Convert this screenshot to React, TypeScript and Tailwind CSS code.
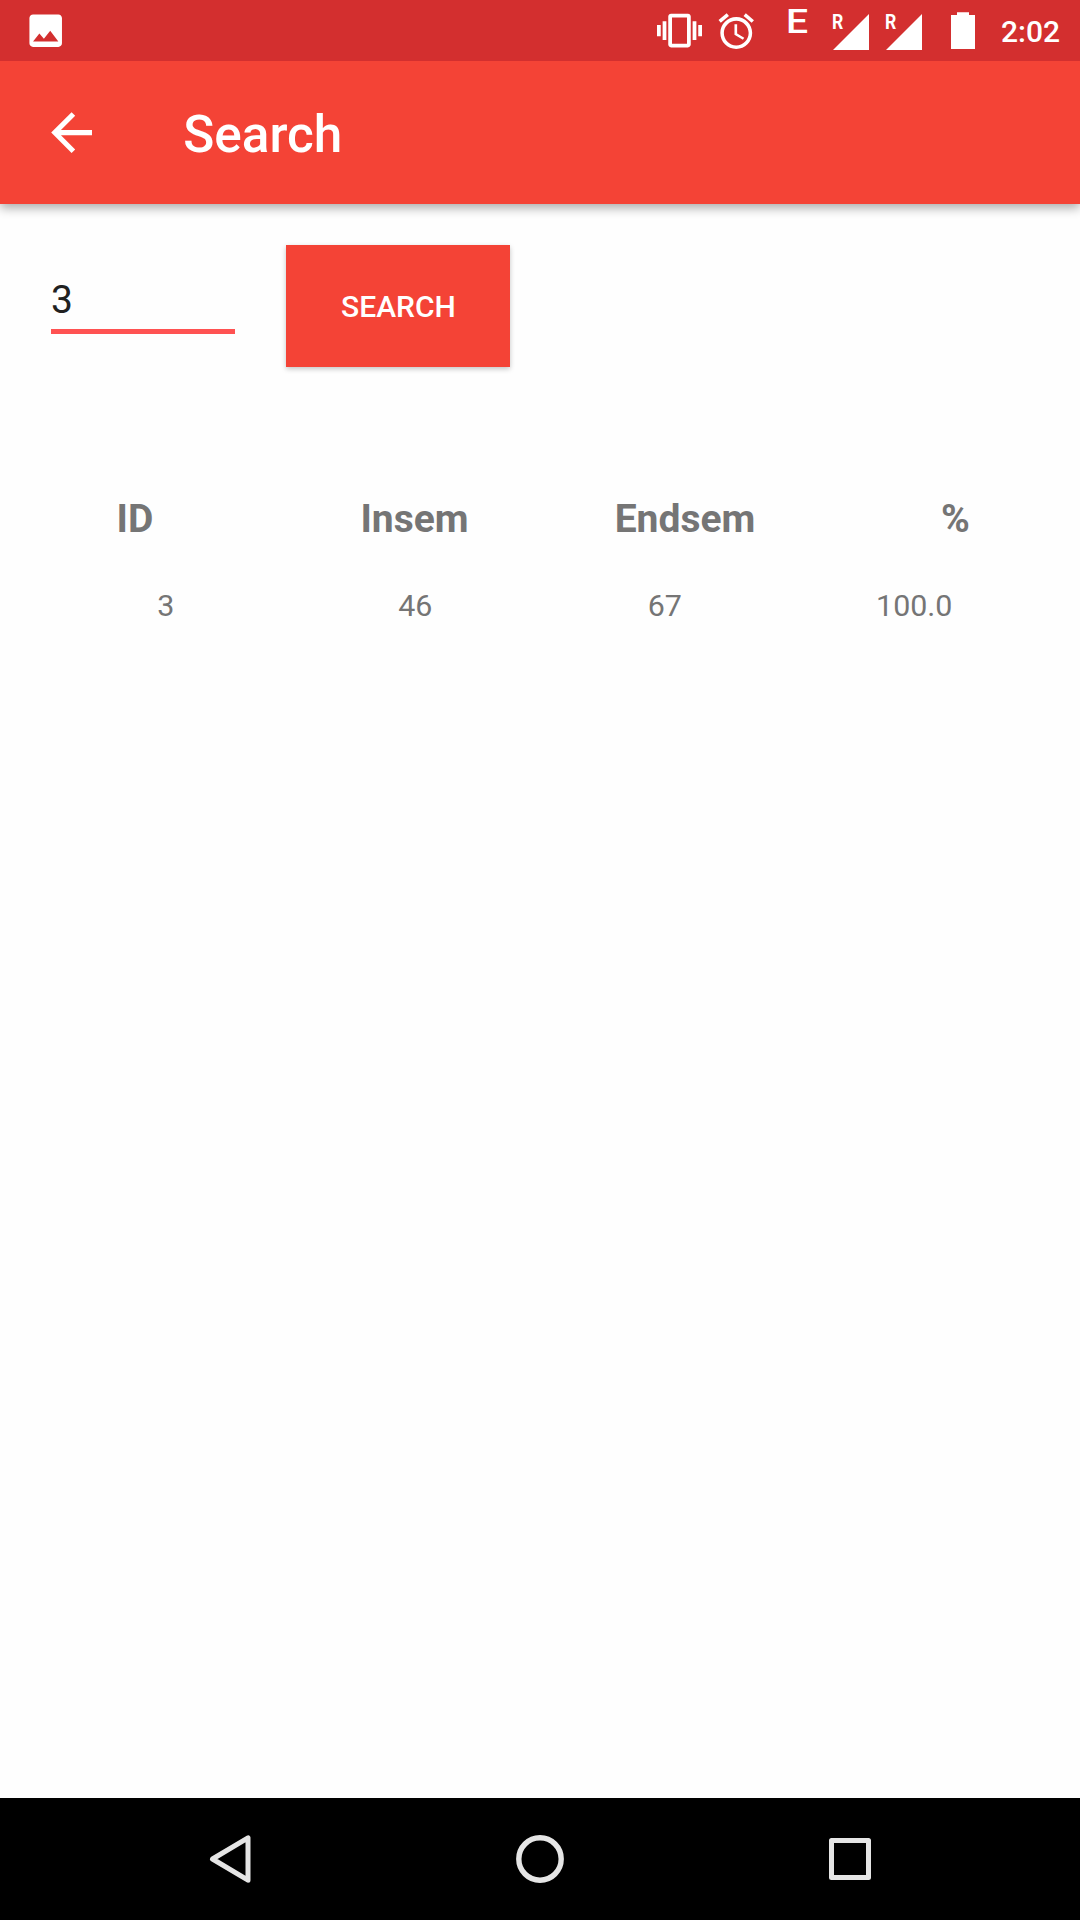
import React from 'react';

const headings = ['ID', 'Insem', 'Endsem', '%'];
const rows = [['3', '46', '67', '100.0']];

function SignalIcon() {
  return (
    <div className="relative h-9 w-9">
      <svg className="block h-9 w-9" viewBox="0 0 36 36" fill="#fff">
        <path d="M36 0v36H0z" />
      </svg>
      <span className="absolute -top-[2px] -left-px origin-left scale-x-[.84] text-[21px] leading-[21px] font-bold">R</span>
    </div>
  );
}

function StatusBar() {
  return (
    <div className="z-10 flex h-[61px] items-start bg-[#d32f2f] text-white">
      <svg className="mt-[9px] ml-[24px] h-[43.4px] w-[43.4px]" viewBox="0 0 24 24" fill="#fff">
        <path d="M21 19V5c0-1.1-.9-2-2-2H5c-1.1 0-2 .9-2 2v14c0 1.1.9 2 2 2h14c1.1 0 2-.9 2-2zM8.5 13.5l2.5 3.01L14.5 12l4.5 6H5l3.5-4.5z" />
      </svg>
      <div className="ml-auto flex items-start">
        <svg className="mt-2 h-[45px] w-[45px]" viewBox="0 0 24 24" fill="#fff">
          <path d="M0 15h2V9H0v6zm3 2h2V7H3v10zm19-8v6h2V9h-2zm-3 8h2V7h-2v10zM16.5 3h-9C6.67 3 6 3.67 6 4.5v15c0 .83.67 1.5 1.5 1.5h9c.83 0 1.5-.67 1.5-1.5v-15c0-.83-.67-1.5-1.5-1.5zM16 19H8V5h8v14z" />
        </svg>
        <svg className="mt-[9.5px] mr-[0.5px] ml-[13px] h-[42.5px] w-[42.5px]" viewBox="0 0 24 24" fill="#fff">
          <path d="M22 5.72l-4.6-3.86-1.29 1.53 4.6 3.86L22 5.72zM7.88 3.39L6.6 1.86 2 5.71l1.29 1.53 4.59-3.85zM12.5 8H11v6l4.75 2.85.75-1.23-4-2.37V8zM12 4c-4.97 0-9 4.03-9 9s4.02 9 9 9c4.97 0 9-4.03 9-9s-4.03-9-9-9zm0 16c-3.87 0-7-3.13-7-7s3.13-7 7-7 7 3.13 7 7-3.13 7-7 7z" />
        </svg>
        <span className="mt-1 ml-7 w-[47px] origin-left scale-x-[1.15] text-[34px] leading-[34px] font-medium">E</span>
        <div className="mt-[14px] flex gap-[17px]">
          <SignalIcon />
          <SignalIcon />
        </div>
        <svg className="mt-3 ml-[29px] h-[37px] w-6" viewBox="0 0 24 37" fill="#fff">
          <path d="M6 .3h12V3h6v34H0V3h6z" />
        </svg>
        <span className="mt-[13px] mr-[20px] ml-[26px] w-[59px] text-[30px] leading-[38px] font-medium">2:02</span>
      </div>
    </div>
  );
}

function AppBar() {
  return (
    <header className="flex h-[143px] items-center bg-[#f44336] pl-[41px] text-white shadow-[0_4px_10px_rgba(0,0,0,0.33)]">
      <button aria-label="Back">
        <svg className="block h-[61.2px] w-[61.2px]" viewBox="0 0 24 24" fill="#fff">
          <path d="M20 11H7.83l5.59-5.59L12 4l-8 8 8 8 1.41-1.41L7.83 13H20v-2z" />
        </svg>
      </button>
      <h1 className="mt-[5px] ml-[81px] text-[51.3px] leading-[60px] font-medium">Search</h1>
    </header>
  );
}

function NavBar() {
  return (
    <nav className="flex h-[122px] items-center justify-center gap-[250px] bg-black">
      <svg className="h-[60px] w-[60px]" viewBox="0 0 60 60" fill="none" stroke="#e5e5e5" strokeWidth="5" strokeLinejoin="round">
        <path d="M12.5 30L48 8.8v42.4z" />
      </svg>
      <svg className="h-[60px] w-[60px]" viewBox="0 0 60 60" fill="none" stroke="#e5e5e5" strokeWidth="5.4">
        <circle cx="30" cy="30" r="21.2" />
      </svg>
      <svg className="h-[60px] w-[60px]" viewBox="0 0 60 60" fill="none" stroke="#e5e5e5" strokeWidth="5" strokeLinejoin="round">
        <path d="M11.5 11.5h37v37h-37z" />
      </svg>
    </nav>
  );
}

export default function App() {
  return (
    <div className="flex h-[1920px] w-[1080px] flex-col overflow-hidden bg-[#fefefe] font-['Roboto',sans-serif]">
      <StatusBar />
      <AppBar />
      <main className="flex-1">
        <div className="flex items-start pt-[41px] pl-[51px]">
          <div className="mr-[51px] h-[89px] w-[184px] border-b-[5px] border-[#ff5252] pt-[32px] text-[39px] leading-[46px] text-[#212121]">
            3
          </div>
          <button className="h-[122px] w-[224px] bg-[#f44336] pl-px text-[30px] font-medium text-white shadow-[0_2px_5px_rgba(0,0,0,0.23)]">
            SEARCH
          </button>
        </div>
        <div className="mt-[128px] grid grid-cols-[270px_289px_252px_289px] text-center text-[39px] leading-[48px] font-bold text-[#757575]">
          {headings.map((h) => (
            <div key={h}>{h}</div>
          ))}
        </div>
        {rows.map((row) => (
          <div key={row[0]} className="mt-[45px] grid grid-cols-4 px-[41px] text-center text-[30.4px] leading-[36px] text-[#757575]">
            {row.map((v) => (
              <div key={v}>{v}</div>
            ))}
          </div>
        ))}
      </main>
      <NavBar />
    </div>
  );
}
